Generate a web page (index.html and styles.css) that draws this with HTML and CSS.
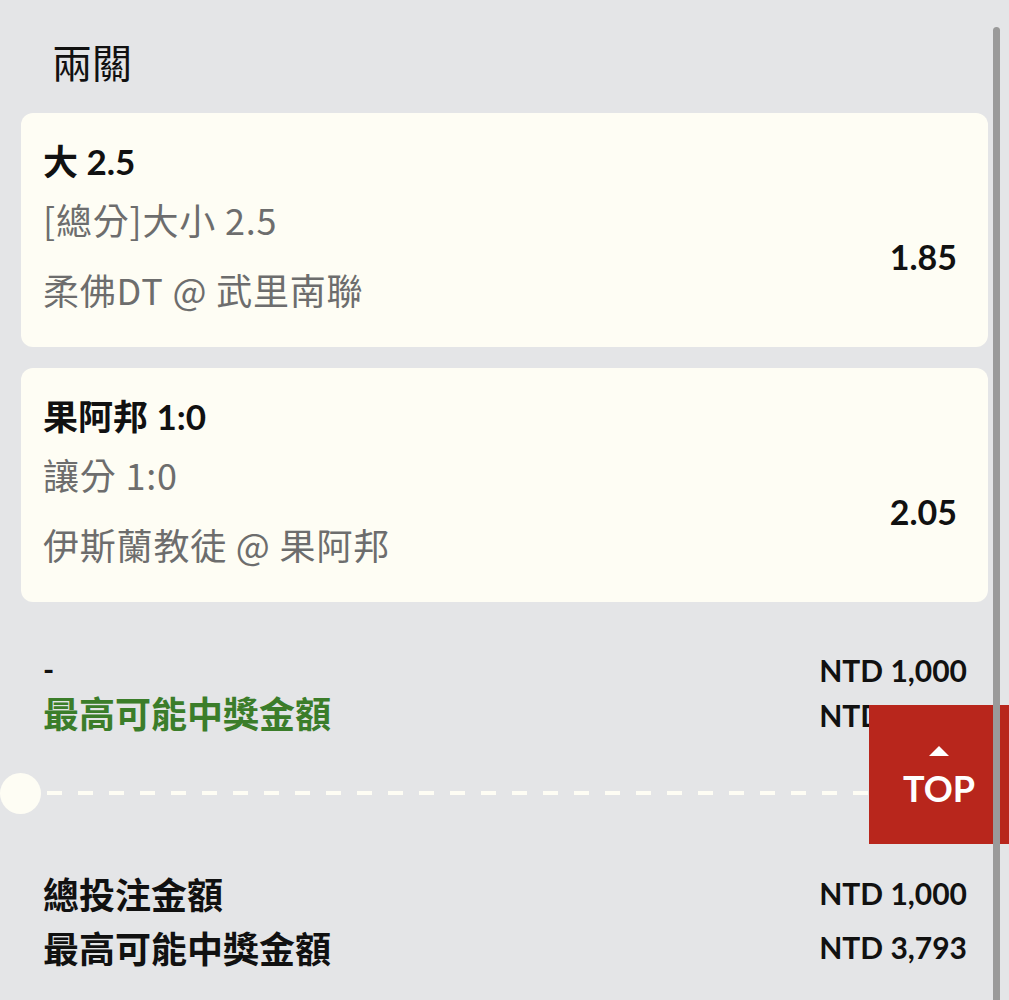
FILE: index.html
```html
<!DOCTYPE html>
<html lang="zh-Hant">
<head>
<meta charset="utf-8">
<title>兩關</title>
<link rel="stylesheet" href="styles.css">
</head>
<body>
<div class="page">
  <header class="header">
    <h1 class="title">兩關</h1>
  </header>

  <section class="bets">
    <div class="bet-card">
      <div class="bet-info">
        <div class="bet-pick">大 2.5</div>
        <div class="bet-market">[總分]大小 2.5</div>
        <div class="bet-match">柔佛DT @ 武里南聯</div>
      </div>
      <div class="bet-odds">1.85</div>
    </div>
    <div class="bet-card">
      <div class="bet-info">
        <div class="bet-pick">果阿邦 1:0</div>
        <div class="bet-market">讓分 1:0</div>
        <div class="bet-match">伊斯蘭教徒 @ 果阿邦</div>
      </div>
      <div class="bet-odds">2.05</div>
    </div>
  </section>

  <section class="combo">
    <div class="row">
      <span class="row-label dash">-</span>
      <span class="row-value">NTD 1,000</span>
    </div>
    <div class="row">
      <span class="row-label green">最高可能中獎金額</span>
      <span class="row-value">NTD 3,793</span>
    </div>
  </section>

  <div class="separator">
    <span class="notch"></span>
    <span class="dashes"></span>
  </div>

  <section class="totals">
    <div class="total-row">
      <span class="total-label">總投注金額</span>
      <span class="total-value">NTD 1,000</span>
    </div>
    <div class="total-row">
      <span class="total-label">最高可能中獎金額</span>
      <span class="total-value">NTD 3,793</span>
    </div>
  </section>
</div>

<a class="top-btn" href="#">
  <span class="top-arrow"></span>
  <span class="top-text">TOP</span>
</a>
<div class="scrollbar"></div>
</body>
</html>
```

FILE: styles.css
```css
html, body {
  margin: 0;
  padding: 0;
  background: #e4e5e7;
}

body {
  font-family: "Lato", "Noto Sans CJK TC", "Noto Sans", sans-serif;
  color: #111;
  height: 1000px;
  overflow: hidden;
}

.page {
  padding: 0 21px 0 21px;
}

.header {
  padding: 36px 0 27px 31px;
}

.title {
  margin: 0;
  font-family: "Noto Sans CJK TC", sans-serif;
  font-size: 40px;
  line-height: 50px;
  font-weight: 400;
  color: #111;
}

.bets {
  display: flex;
  flex-direction: column;
  gap: 21px;
}

.bet-card {
  background: #fefdf4;
  border-radius: 12px;
  height: 234px;
  box-sizing: border-box;
  padding: 24px 31px 0 22px;
  display: flex;
  justify-content: space-between;
}

.bet-info {
  display: flex;
  flex-direction: column;
}

.bet-pick {
  font-size: 35px;
  line-height: 48px;
  font-weight: 700;
  color: #111;
}

.bet-market,
.bet-match {
  font-family: "Noto Sans CJK TC", "Noto Sans", sans-serif;
  font-size: 36px;
  line-height: 48px;
  font-weight: 400;
  letter-spacing: 0.8px;
  color: #6d6d6d;
}

.bet-market {
  margin-top: 10px;
}

.bet-match {
  margin-top: 22px;
}

.bet-odds {
  align-self: flex-start;
  margin-top: 96px;
  font-size: 34px;
  line-height: 48px;
  font-weight: 700;
  color: #111;
}

.combo {
  margin-top: 45px;
  padding: 0 21px 0 22px;
}

.row {
  display: flex;
  justify-content: space-between;
  align-items: center;
  height: 45px;
}

.row-label {
  font-size: 36px;
  font-weight: 700;
  line-height: 45px;
}

.row-label.dash {
  font-size: 30px;
}

.row-label.green {
  color: #3b7d2a;
}

.row-value,
.total-value {
  font-size: 30px;
  font-weight: 700;
  color: #111;
}

.separator {
  margin: 35px -21px 0 -21px;
  height: 42px;
  display: flex;
  align-items: center;
}

.notch {
  flex: none;
  width: 41px;
  height: 41px;
  border-radius: 50%;
  background: #fefdf4;
}

.dashes {
  flex: 1;
  height: 4px;
  margin-left: 6px;
  background: repeating-linear-gradient(90deg, #fefdf4 0 15px, transparent 15px 31px);
}

.totals {
  margin-top: 52px;
  padding: 0 21px 0 22px;
}

.total-row {
  display: flex;
  justify-content: space-between;
  align-items: center;
  height: 54px;
}

.total-label {
  font-size: 36px;
  font-weight: 700;
  color: #111;
}

.top-btn {
  position: absolute;
  left: 869px;
  top: 705px;
  width: 140px;
  height: 139px;
  background: #b8261c;
  display: flex;
  flex-direction: column;
  align-items: center;
  justify-content: center;
  text-decoration: none;
}

.top-arrow {
  width: 0;
  height: 0;
  border-left: 10px solid transparent;
  border-right: 10px solid transparent;
  border-bottom: 10px solid #fff;
  margin-top: 3px;
  margin-bottom: 14px;
}

.top-text {
  color: #fff;
  font-size: 36px;
  font-weight: 700;
  line-height: 36px;
}

.scrollbar {
  position: absolute;
  left: 993px;
  top: 27px;
  width: 7px;
  height: 973px;
  background: #9a9a9a;
  border-radius: 4px 4px 0 0;
}
```
